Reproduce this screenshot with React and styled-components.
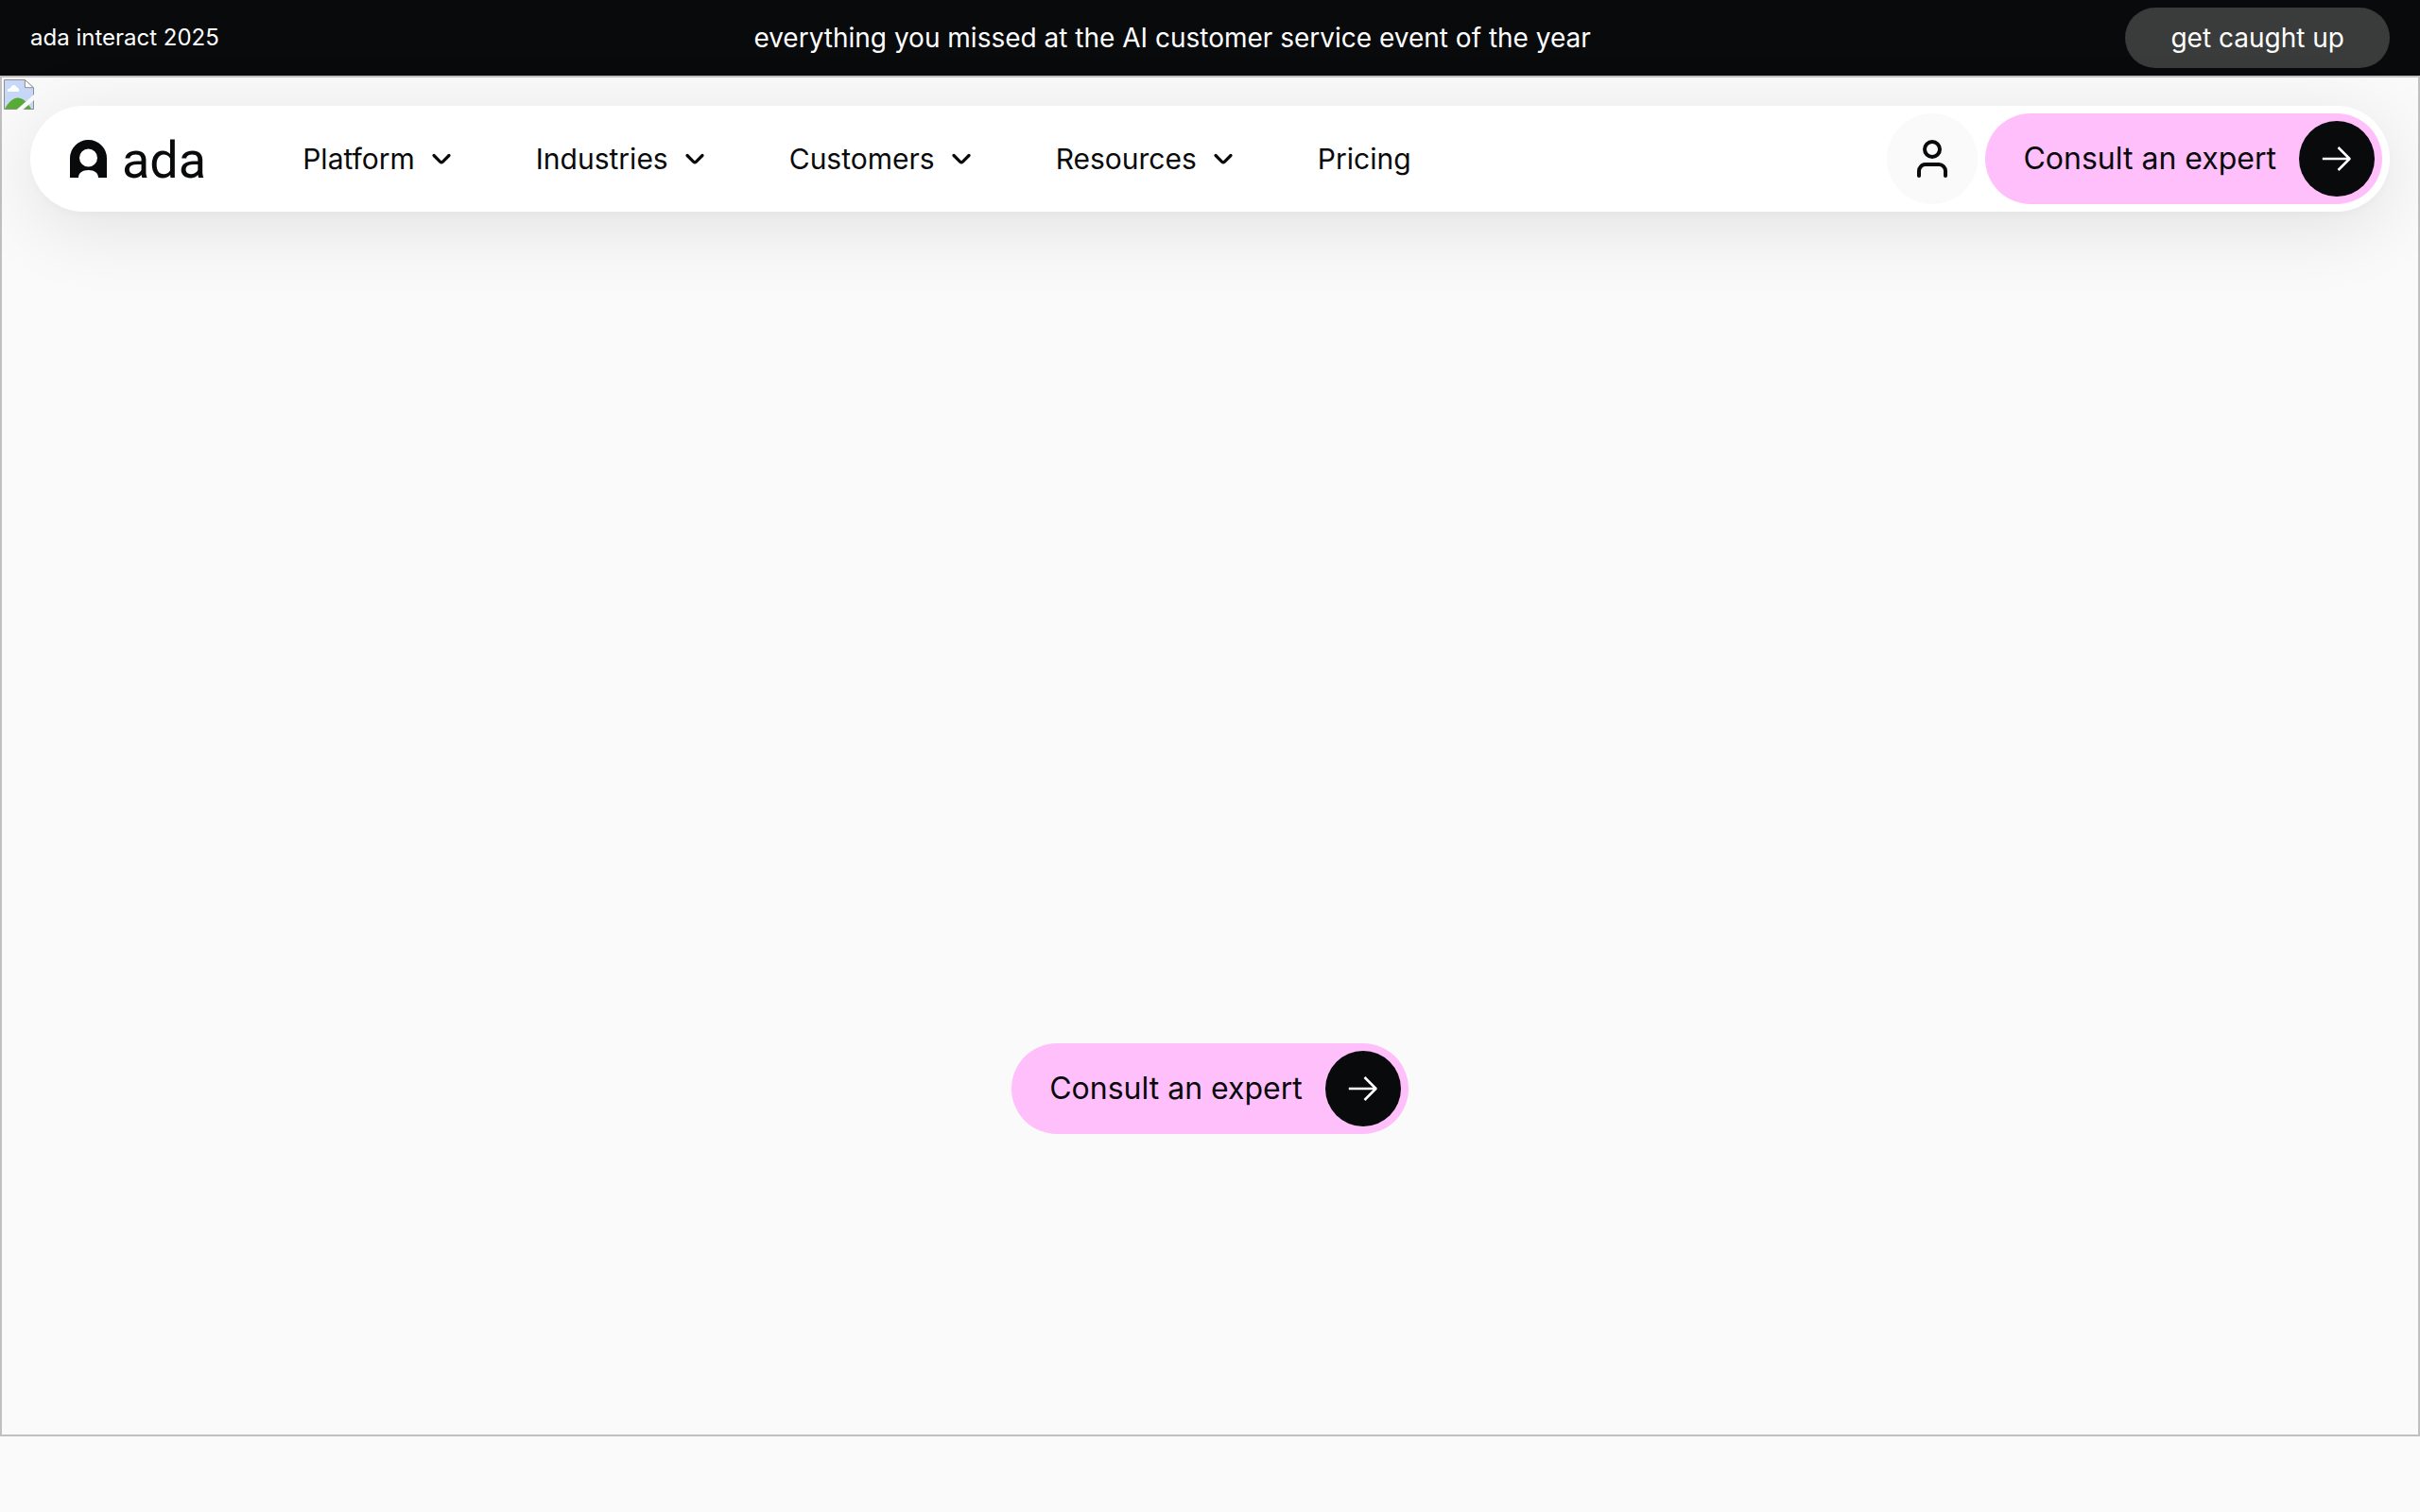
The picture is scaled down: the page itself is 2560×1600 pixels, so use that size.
import React from "react";
import styled, { createGlobalStyle } from "styled-components";

const ink = "#090a0b";
const paper = "#fafafa";
const pink = "#ffbffb";

const GlobalStyle = createGlobalStyle`
  *, *::before, *::after { box-sizing: border-box; }
  body {
    margin: 0;
    background: ${paper};
    color: ${ink};
    font-family: Inter, "Liberation Sans", sans-serif;
  }
`;

const Banner = styled.aside`
  display: flex;
  align-items: center;
  justify-content: space-between;
  min-height: 80px;
  padding: 8px 32px;
  background: ${ink};
  color: #fff;
`;

const BannerText = styled.p`
  margin: 0;
  font-size: ${(p) => (p.$small ? "24px" : "28px")};
  line-height: 32px;
`;

const BannerLink = styled.a`
  display: flex;
  align-items: center;
  height: 64px;
  padding: 0 48px;
  border-radius: 32px;
  background: #3a3b3b;
  color: #fff;
  font-size: 28px;
  line-height: 32px;
  text-decoration: none;
`;

const Hero = styled.section`
  position: relative;
  display: flex;
  flex-direction: column;
  justify-content: space-between;
  align-items: center;
  min-height: 90vh;
  padding: 30px 30px 318px;
  border: 2px solid #c0c0c0;
`;

const BrokenImage = styled.svg`
  position: absolute;
  top: 2px;
  left: 2px;
  width: 32px;
  height: 32px;
`;

const Header = styled.header`
  position: relative;
  display: flex;
  align-items: center;
  gap: 8px;
  width: 100%;
  padding: 8px 8px 8px 42px;
  border-radius: 56px;
  background: #fff;
  box-shadow: 0 4px 8px rgba(0, 0, 0, 0.02), 0 16px 80px rgba(0, 0, 0, 0.1);
`;

const Logo = styled.a`
  display: flex;
  align-items: center;
  gap: 16px;
  color: ${ink};
  text-decoration: none;
`;

const LogoMark = styled.svg`
  width: 39px;
  height: 40px;
`;

const Wordmark = styled.span`
  padding-top: 4px;
  font-family: Roboto, "Liberation Sans", sans-serif;
  font-size: 54px;
  line-height: 64px;
`;

const Nav = styled.nav`
  display: flex;
  flex: 1;
  align-items: center;
  gap: 84px;
  padding-left: 94px;
`;

const NavButton = styled.button`
  display: flex;
  align-items: center;
  gap: 12px;
  padding: 0;
  border: 0;
  background: none;
  color: inherit;
  font: inherit;
  font-size: 30px;
  line-height: 40px;
`;

const NavLink = styled.a`
  color: inherit;
  font-size: 30px;
  line-height: 40px;
  text-decoration: none;
`;

const Chevron = styled.svg`
  width: 32px;
  height: 32px;
`;

const Account = styled.a`
  display: grid;
  place-items: center;
  width: 96px;
  height: 96px;
  border-radius: 50%;
  background: ${paper};
  color: inherit;

  svg { width: 48px; height: 48px; }
`;

const Cta = styled.a`
  display: flex;
  align-items: center;
  gap: 24px;
  height: 96px;
  padding: 8px 8px 8px 40px;
  border-radius: 48px;
  background: ${pink};
  color: ${ink};
  font-size: 32px;
  line-height: 48px;
  text-decoration: none;
`;

const CtaArrow = styled.span`
  display: grid;
  place-items: center;
  width: 80px;
  height: 80px;
  border-radius: 50%;
  background: ${ink};
  color: #fff;

  svg { width: 40px; height: 40px; }
`;

function ConsultLink() {
  return (
    <Cta href="#consult">
      Consult an expert
      <CtaArrow>
        <svg viewBox="0 0 40 40" fill="none" stroke="currentColor" strokeWidth="2.500" strokeLinejoin="round" aria-hidden="true">
          <path d="M4.800 20h28.700M21.500 8l12 12l-12 12" />
        </svg>
      </CtaArrow>
    </Cta>
  );
}

const menus = ["Platform", "Industries", "Customers", "Resources"];

export default function App() {
  return (
    <>
      <GlobalStyle />
      <Banner>
        <BannerText $small>ada interact 2025</BannerText>
        <BannerText>everything you missed at the AI customer service event of the year</BannerText>
        <BannerLink href="#interact">get caught up</BannerLink>
      </Banner>
      <main>
        <Hero>
          <BrokenImage viewBox="0 0 16 16" aria-hidden="true">
            <path d="M.25.25h11l4.500 4.200v11.300H.25z" fill="#c8d8f8" stroke="#8f8f8f" strokeWidth=".5" />
            <path d="M2 6.500c-.4-1.700 1-1.800 1.500-1.700C4 2.600 6.300 2.300 6.900 4.300c1 .1 1.500 1.200 1.100 2.200z" fill="#fff" />
            <path d="M.6 15.500C4.800 8.200 9.500 7.500 14.500 15.500z" fill="#57ad35" />
            <path d="M6.800 16L16 8v3L10.200 16z" fill="#fafafa" />
            <path d="M11.200 0H16v4.400z" fill="#fafafa" />
            <path d="M11.200.25v4.100h4.500z" fill="#fff" stroke="#8f8f8f" strokeWidth=".5" />
          </BrokenImage>
          <Header>
            <Logo href="#home" aria-label="ada">
              <LogoMark viewBox="0 0 39 40" aria-hidden="true">
                <path fill="currentColor" fillRule="evenodd" d="M0 40V19.500a19.500 19.500 0 0 1 39 0V40h-9c0-5-4-8-10.500-8S9 35 9 40zM19.500 9.500a9.500 9.500 0 1 0 0 19a9.500 9.500 0 0 0 0-19z" />
              </LogoMark>
              <Wordmark>ada</Wordmark>
            </Logo>
            <Nav aria-label="Main">
              {menus.map((name) => (
                <NavButton key={name} type="button" aria-haspopup="true">
                  {name}
                  <Chevron viewBox="0 0 32 32" fill="none" stroke="currentColor" strokeWidth="3.200" strokeLinecap="round" strokeLinejoin="round" aria-hidden="true">
                    <path d="M8 12.500l6.800 6.800q1.200 1 2.400 0l6.800-6.800" />
                  </Chevron>
                </NavButton>
              ))}
              <NavLink href="#pricing">Pricing</NavLink>
            </Nav>
            <Account href="#account" aria-label="Log in">
              <svg viewBox="0 0 48 48" fill="none" stroke="currentColor" strokeWidth="4" strokeLinecap="round" aria-hidden="true">
                <circle cx="24" cy="14" r="8" />
                <path d="M10 42v-5a7 7 0 0 1 7-7h14a7 7 0 0 1 7 7v5" />
              </svg>
            </Account>
            <ConsultLink />
          </Header>
          <ConsultLink />
        </Hero>
      </main>
    </>
  );
}
